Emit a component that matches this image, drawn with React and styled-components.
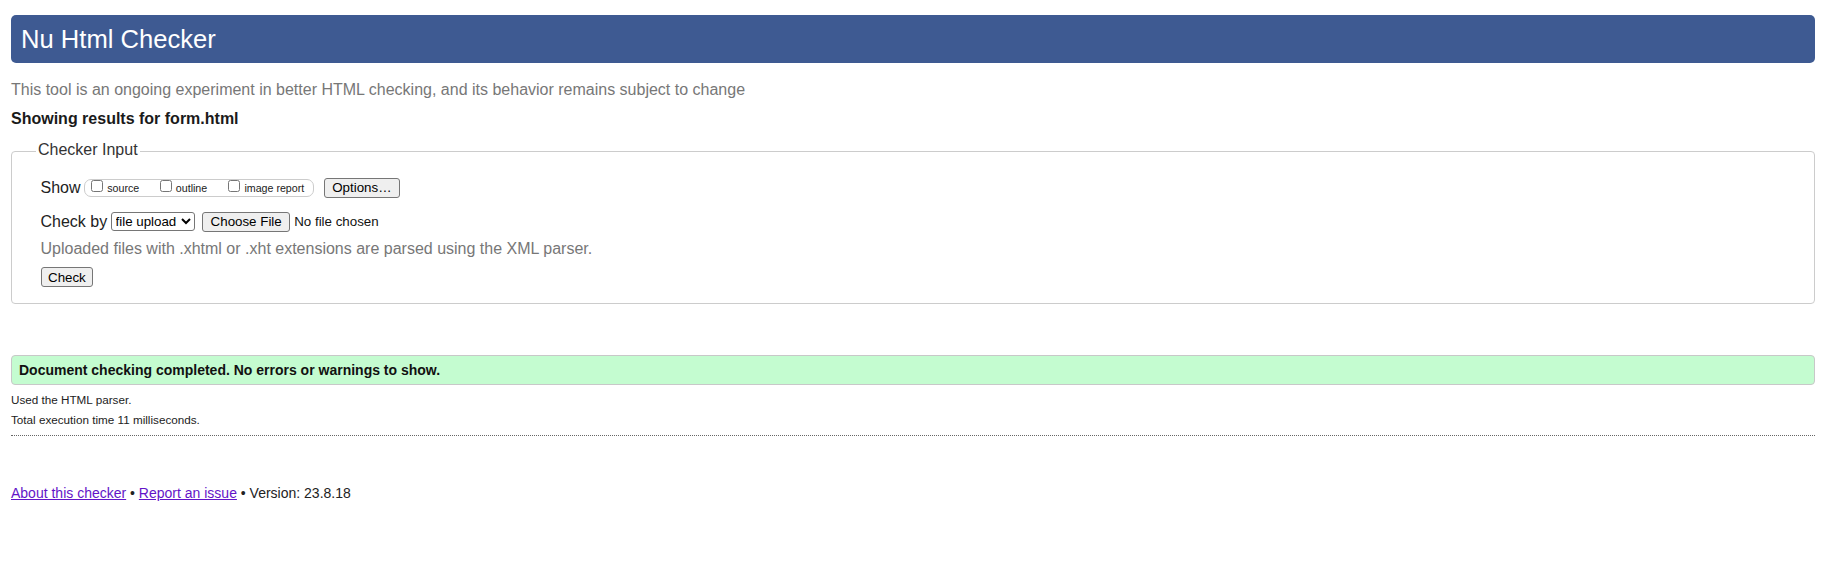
import React from 'react';
import styled, { createGlobalStyle } from 'styled-components';

const GlobalStyle = createGlobalStyle`
  html, body { margin: 0; padding: 0; background: #ffffff; }
  body {
    font-family: Arial, "Liberation Sans", sans-serif;
    font-size: 16px;
    color: #222;
  }
`;

const Page = styled.div`
  padding: 15px 30px 40px 11px;
`;

const Header = styled.h1`
  margin: 0;
  height: 48px;
  line-height: 48px;
  padding: 0 10px;
  background: #3e5a92;
  color: #ffffff;
  font-size: 25.6px;
  font-weight: normal;
  border-radius: 5px;
`;

const Intro = styled.p`
  margin: 17.5px 0 0;
  color: #777777;
  font-size: 16px;
  line-height: 18.4px;
`;

const ResultsFor = styled.p`
  margin: 11px 0 0;
  font-weight: bold;
  font-size: 16px;
  line-height: 18.4px;
  color: #1a1a1a;
`;

const Fieldset = styled.fieldset`
  margin: 12.5px 0 0;
  padding: 14.5px 28px 16.3px 28.5px;
  border: 1px solid #cccccc;
  border-radius: 4px;
  min-width: 0;
`;

const Legend = styled.legend`
  margin-left: -4.5px;
  padding: 0 2px 3px;
  color: #333333;
  font-size: 16px;
  line-height: 18.4px;
`;

const Row = styled.div`
  display: flex;
  align-items: center;
  height: ${p => p.$h || 22}px;
  margin-top: ${p => p.$mt || 0}px;
`;

const FieldLabel = styled.span`
  font-size: 16px;
  line-height: 18.4px;
  color: #222222;
`;

const Pill = styled.span`
  display: inline-flex;
  align-items: center;
  box-sizing: border-box;
  height: 18.4px;
  margin-left: 3px;
  padding: 0 8.5px 0 6.7px;
  border: 1px solid #cccccc;
  border-radius: 7px;
`;

const Option = styled.label`
  display: inline-flex;
  align-items: center;
  min-width: 68.6px;
  font-size: 10.67px;
  line-height: 12.3px;
  color: #222222;
`;

const CheckBox = styled.input.attrs({ type: 'checkbox' })`
  width: 12px;
  height: 12px;
  margin: -4px 4px 0 0;
`;

const Button = styled.button`
  box-sizing: border-box;
  height: 20px;
  margin: 0 0 0 ${p => p.$ml || 0}px;
  padding: 0 ${p => p.$px || 7}px;
  font-family: Arial, "Liberation Sans", sans-serif;
  font-size: 13.33px;
  color: #000000;
  background: #efefef;
  border: 1px solid #767676;
  border-radius: 3px;
`;

const Select = styled.select`
  box-sizing: border-box;
  width: 84px;
  height: 19px;
  margin-left: 3.3px;
  font-family: Arial, "Liberation Sans", sans-serif;
  font-size: 13.33px;
  color: #000000;
  background: #ffffff;
  border: 1px solid #767676;
  border-radius: 3px;
`;

const FileText = styled.span`
  margin-left: 4px;
  font-size: 13.33px;
  color: #111111;
`;

const Note = styled.p`
  margin: 7.3px 0 0;
  font-size: 16px;
  line-height: 18.4px;
  color: #777777;
`;

const Success = styled.div`
  margin-top: 51px;
  padding: 5.5px 7px;
  border: 1px solid #c8c8c8;
  border-radius: 4px;
  background: #c4fcd0;
  font-weight: bold;
  font-size: 14px;
  line-height: 16.1px;
  color: #111111;
`;

const Small = styled.p`
  margin: ${p => p.$mt}px 0 0;
  font-size: 11.7px;
  line-height: 13.45px;
  color: #222222;
`;

const Divider = styled.div`
  margin-top: 8.5px;
  border-top: 1px dotted #666666;
`;

const Footer = styled.p`
  margin: 49px 0 0;
  font-size: 14px;
  line-height: 16.1px;
  color: #222222;
`;

const Link = styled.a`
  color: #6314c8;
  text-decoration: underline;
`;

export default function App() {
  return (
    <>
      <GlobalStyle />
      <Page>
        <Header>Nu Html Checker</Header>
        <Intro>
          This tool is an ongoing experiment in better HTML checking, and its behavior remains subject to change
        </Intro>
        <ResultsFor>Showing results for form.html</ResultsFor>
        <Fieldset>
          <Legend>Checker Input</Legend>
          <Row>
            <FieldLabel>Show</FieldLabel>
            <Pill>
              <Option><CheckBox />source</Option>
              <Option><CheckBox />outline</Option>
              <Option><CheckBox />image report</Option>
            </Pill>
            <Button $ml={10.5} $px={7}>Options…</Button>
          </Row>
          <Row $mt={12}>
            <FieldLabel>Check by</FieldLabel>
            <Select defaultValue="file">
              <option value="file">file upload</option>
              <option value="address">address</option>
              <option value="text">text input</option>
            </Select>
            <Button $ml={7.6} $px={7.5}>Choose File</Button>
            <FileText>No file chosen</FileText>
          </Row>
          <Note>Uploaded files with .xhtml or .xht extensions are parsed using the XML parser.</Note>
          <Row $mt={8.7} $h={20}>
            <Button $px={6.5}>Check</Button>
          </Row>
        </Fieldset>
        <Success>Document checking completed. No errors or warnings to show.</Success>
        <Small $mt={8}>Used the HTML parser.</Small>
        <Small $mt={7.3}>Total execution time 11 milliseconds.</Small>
        <Divider />
        <Footer>
          <Link href="#about">About this checker</Link> • <Link href="#issue">Report an issue</Link> • Version: 23.8.18
        </Footer>
      </Page>
    </>
  );
}
